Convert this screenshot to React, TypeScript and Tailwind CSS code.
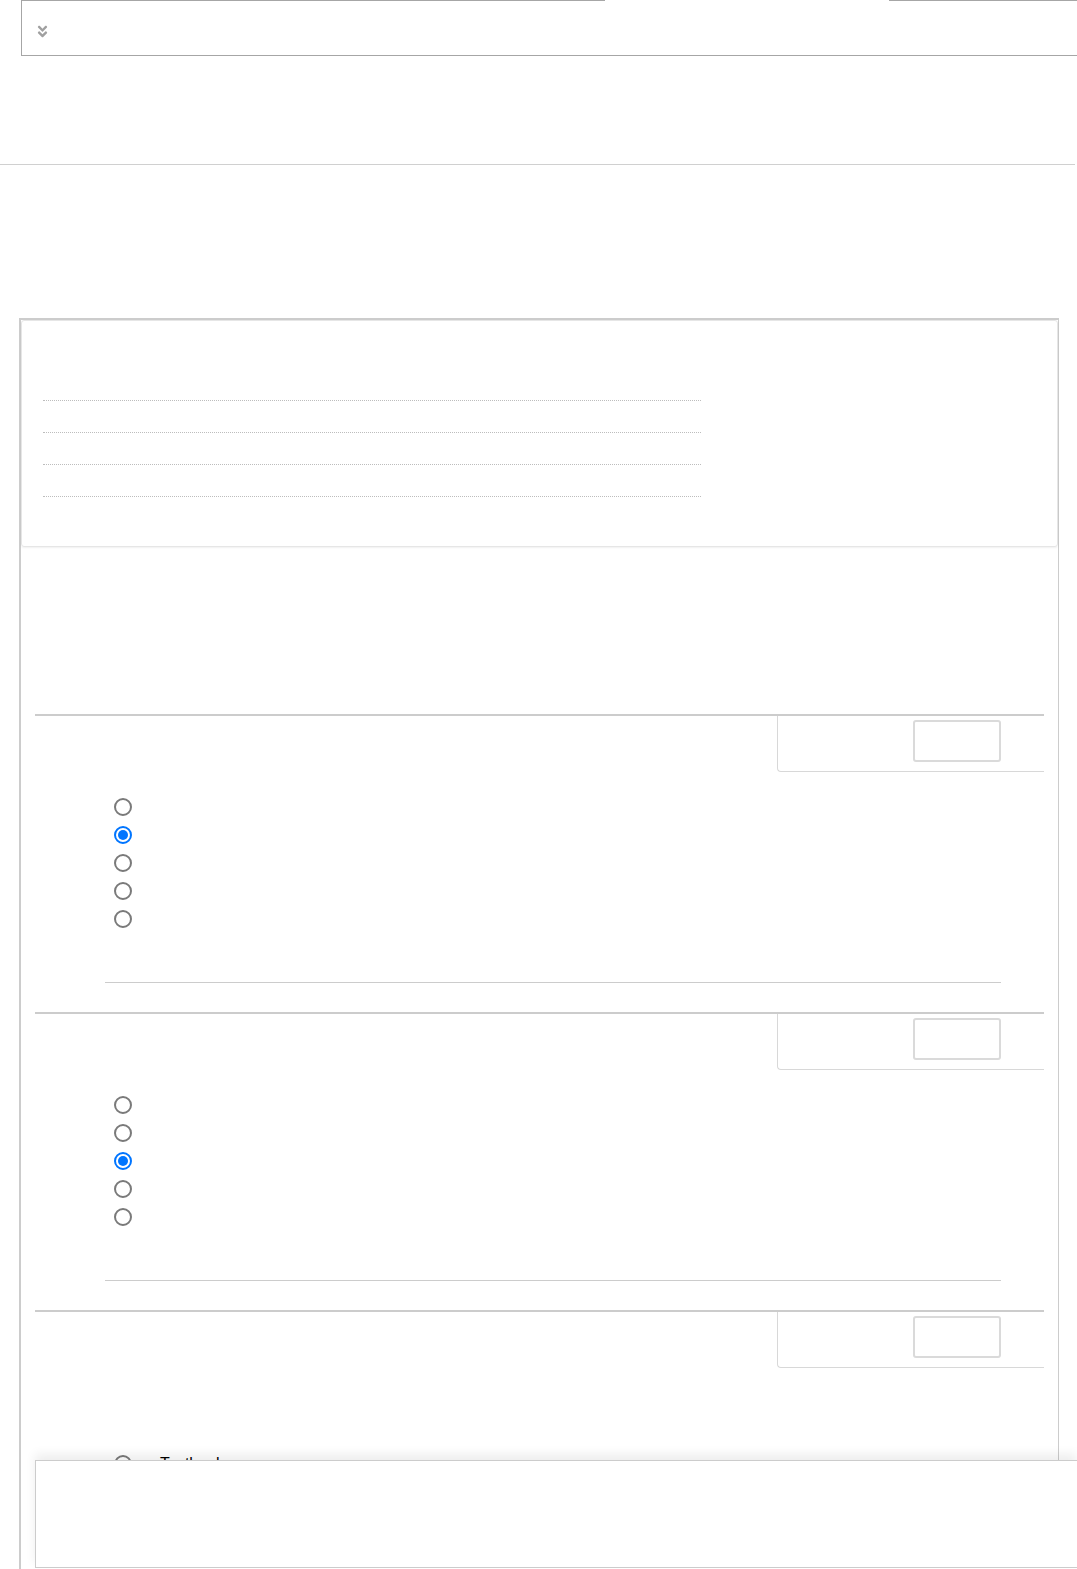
import { FaAngleDoubleDown } from 'react-icons/fa';

// 設問ブロックの型
type Question = {
  answers: string[];
  selected: number | null;
  extra?: boolean;
};

const questions: Question[] = [
  { answers: ['', '', '', '', ''], selected: 1 },
  { answers: ['', '', '', '', ''], selected: 2 },
  { answers: ['Textbook', '', '', '', ''], selected: null, extra: true },
];

function Radio({ checked }: { checked: boolean }) {
  if (checked) {
    return (
      <span className="flex h-[18px] w-[18px] items-center justify-center rounded-full border-2 border-[#0075ff] bg-white">
        <span className="h-[10px] w-[10px] rounded-full bg-[#0075ff]" />
      </span>
    );
  }
  return <span className="block h-[18px] w-[18px] rounded-full border-2 border-[#7a7a7a] bg-white" />;
}

function QuestionBlock({ q }: { q: Question }) {
  return (
    <div className="mx-[14px] border-t-2 border-[#cccccc]">
      {/* 右上の採点欄 */}
      <div className="flex justify-end">
        <div className="flex h-[56px] w-[267px] justify-end rounded-bl-[4px] border-b border-l border-[#d8d8d8] pr-[43px] pt-[4px]">
          <div className="h-[42px] w-[88px] rounded-[3px] border-2 border-[#dadada]" />
        </div>
      </div>

      {q.extra && <div className="h-[61px]" />}

      <ul className="mt-[21px] pl-[79px]">
        {q.answers.map((a, i) => (
          <li key={i} className="flex h-[28px] items-center">
            <Radio checked={q.selected === i} />
            <span className="ml-[28px] text-[16px] text-black">{a}</span>
          </li>
        ))}
      </ul>

      <div className="ml-[70px] mr-[43px] mt-[49px] border-t border-[#cccccc]" />
      <div className="h-[29px]" />
    </div>
  );
}

export default function App() {
  return (
    <div className="relative h-[1569px] overflow-hidden bg-white font-['Liberation_Sans',Arial,sans-serif]">
      {/* 上部の折りたたみボックス */}
      <div className="relative ml-[21px] flex h-[56px] items-center border border-r-0 border-[#a6a6a6] pl-[13px]">
        <span className="absolute -top-px left-[583px] h-[2px] w-[284px] bg-white" />
        <FaAngleDoubleDown className="mt-[6px] text-[15px] text-[#a0a0a0]" />
      </div>

      <hr className="mr-[2px] mt-[108px] border-0 border-t border-[#d0d0d0]" />

      {/* 本体 */}
      <div className="ml-[19px] mt-[153px] w-[1040px] border-l-2 border-r border-t-2 border-[#cccccc] pb-[400px]">
        <div className="rounded-[3px] border border-[#e6e6e6] pb-[49px] pl-[21px] pt-[48px] shadow-[0_1px_2px_rgba(0,0,0,0.06)]">
          {[0, 1, 2, 3].map((i) => (
            <div key={i} className="h-[32px] w-[658px] border-b border-dotted border-[#bdbdbd]" />
          ))}
        </div>

        <div className="h-[167px]" />

        {questions.map((q, i) => (
          <QuestionBlock key={i} q={q} />
        ))}
      </div>

      {/* 下部の固定パネル */}
      <div className="fixed bottom-0 left-[35px] right-0 bg-white pb-px shadow-[0_-6px_10px_rgba(0,0,0,0.07)]">
        <div className="h-[108px] border border-r-0 border-[#cccccc] bg-white" />
      </div>
    </div>
  );
}
